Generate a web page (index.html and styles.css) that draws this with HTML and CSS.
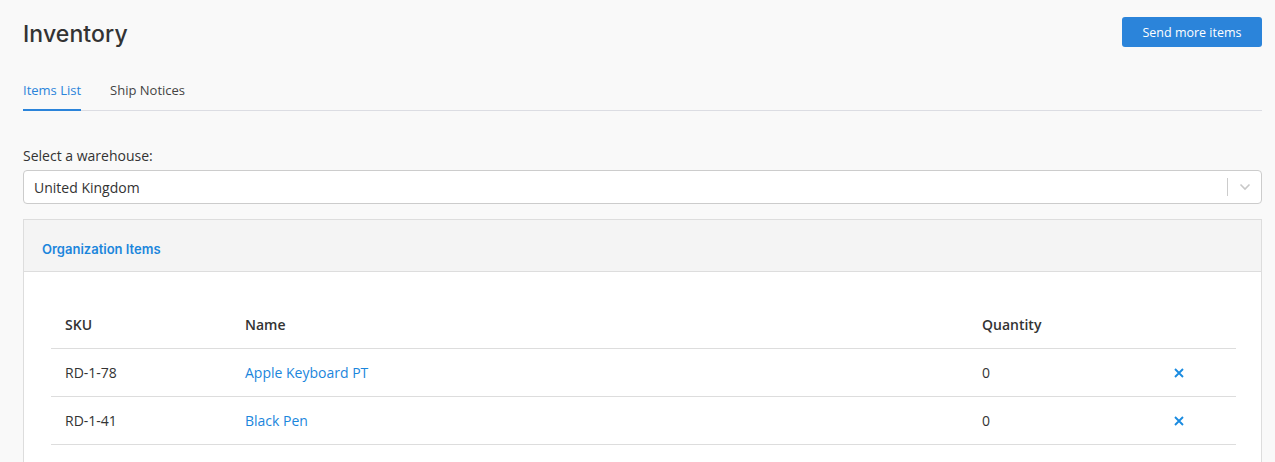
FILE: index.html
```html
<!DOCTYPE html>
<html>
<head>
<meta charset="utf-8">
<link rel="stylesheet" href="styles.css">
</head>
<body>
<div class="page">
  <div class="header">
    <h1 class="title">Inventory</h1>
    <button class="btn-primary">Send more items</button>
  </div>
  <div class="tabs">
    <div class="tab active">Items List</div>
    <div class="tab">Ship Notices</div>
  </div>
  <label class="field-label">Select a warehouse:</label>
  <div class="select">
    <span class="select-value">United Kingdom</span>
    <span class="select-sep"></span>
    <svg class="select-chev" width="12" height="8" viewBox="0 0 12 8"><path d="M1.5 1.5 L6 6 L10.5 1.5" fill="none" stroke="#c8c8c8" stroke-width="1.6"/></svg>
  </div>
  <div class="card">
    <div class="card-header">Organization Items</div>
    <div class="card-body">
      <table class="items">
        <colgroup><col class="c1"><col class="c2"><col class="c3"><col class="c4"></colgroup>
        <thead>
          <tr><th>SKU</th><th>Name</th><th>Quantity</th><th></th></tr>
        </thead>
        <tbody>
          <tr><td>RD-1-78</td><td><a class="link">Apple Keyboard PT</a></td><td>0</td><td><svg class="x" width="10" height="10" viewBox="0 0 10 10"><path d="M1 1 L9 9 M9 1 L1 9" stroke="#1a8be0" stroke-width="1.9"/></svg></td></tr>
          <tr><td>RD-1-41</td><td><a class="link">Black Pen</a></td><td>0</td><td><svg class="x" width="10" height="10" viewBox="0 0 10 10"><path d="M1 1 L9 9 M9 1 L1 9" stroke="#1a8be0" stroke-width="1.9"/></svg></td></tr>
          <tr><td>RD-1-52</td><td><a class="link">Blue Notebook Black</a></td><td>0</td><td><svg class="x" width="10" height="10" viewBox="0 0 10 10"><path d="M1 1 L9 9 M9 1 L1 9" stroke="#1a8be0" stroke-width="1.9"/></svg></td></tr>
        </tbody>
      </table>
    </div>
  </div>
</div>
</body>
</html>
```

FILE: styles.css
```css
html, body {
  margin: 0;
  padding: 0;
  background: #f9f9f9;
  font-family: "Open Sans", "Liberation Sans", sans-serif;
  color: #333;
  overflow: hidden;
}
.page {
  padding: 17px 13px 0 23px;
}
.header {
  display: flex;
  justify-content: space-between;
  align-items: flex-start;
}
.title {
  margin: 0;
  padding-top: 2px;
  font-family: "Inter", "Open Sans", sans-serif;
  font-weight: 500;
  font-size: 23px;
  line-height: 31px;
  color: #333;
  letter-spacing: 0.1px;
}
.btn-primary {
  width: 140px;
  height: 30px;
  border: none;
  border-radius: 3px;
  background: #2b84da;
  color: #fff;
  font-family: "Open Sans", sans-serif;
  font-size: 12.5px;
  padding: 0;
}
.tabs {
  display: flex;
  margin-top: 22px;
  border-bottom: 1px solid #dcdde3;
}
.tab {
  font-size: 13px;
  line-height: 18px;
  padding: 9px 0 10px;
  margin-right: 29px;
  color: #444;
  border-bottom: 2px solid transparent;
  margin-bottom: -1px;
}
.tab.active {
  color: #2b84da;
  border-bottom-color: #2b84da;
}
.field-label {
  display: block;
  margin-top: 35px;
  font-size: 14px;
  line-height: 20px;
  color: #333;
}
.select {
  margin-top: 4px;
  height: 32px;
  background: #fff;
  border: 1px solid #cccccc;
  border-radius: 4px;
  display: flex;
  align-items: center;
  padding-left: 10px;
}
.select-value {
  flex: 1;
  font-size: 14px;
  color: #333;
}
.select-sep {
  width: 1px;
  height: 18px;
  background: #cccccc;
  margin-right: 11px;
}
.select-chev {
  margin-right: 10px;
}
.card {
  margin-top: 15px;
  border: 1px solid #dddddd;
  background: #fff;
}
.card-header {
  height: 52px;
  box-sizing: border-box;
  padding: 20px 0 0 18px;
  background: #f4f4f4;
  border-bottom: 1px solid #dddddd;
  font-family: "Inter", "Open Sans", sans-serif;
  font-weight: 600;
  font-size: 13px;
  line-height: 18px;
  color: #1b86dc;
}
.card-body {
  padding: 29px 25px 0 27px;
}
.items {
  width: 100%;
  border-collapse: collapse;
  table-layout: fixed;
}
.c1 { width: 180px; }
.c2 { width: 737px; }
.c3 { width: 196px; }
.c4 { width: 72px; }
.items th {
  text-align: left;
  font-weight: 600;
  font-size: 14px;
  color: #333;
  height: 47px;
  padding: 0 0 0 14px;
  border-bottom: 1px solid #dddddd;
}
.items td {
  font-size: 14px;
  color: #333;
  height: 47px;
  padding: 0 0 0 14px;
  border-bottom: 1px solid #dddddd;
}
.link {
  color: #1b86dc;
  text-decoration: none;
}
.x {
  display: block;
  margin-left: -4px;
}
```
